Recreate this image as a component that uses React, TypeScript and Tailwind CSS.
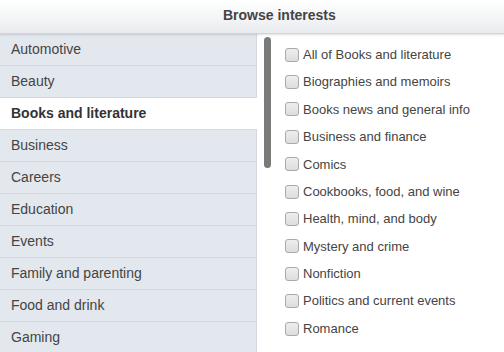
import React from "react";

const cats = [
  "Automotive",
  "Beauty",
  "Books and literature",
  "Business",
  "Careers",
  "Education",
  "Events",
  "Family and parenting",
  "Food and drink",
  "Gaming",
];

const subs = [
  "All of Books and literature",
  "Biographies and memoirs",
  "Books news and general info",
  "Business and finance",
  "Comics",
  "Cookbooks, food, and wine",
  "Health, mind, and body",
  "Mystery and crime",
  "Nonfiction",
  "Politics and current events",
  "Romance",
];

export default function App() {
  return (
    <div
      className="w-[504px] h-[352px] overflow-hidden bg-white flex flex-col"
      style={{ fontFamily: '"Liberation Sans", Arial, sans-serif' }}
    >
      <div className="relative z-10 h-[34px] shrink-0 flex items-center pl-[223px] pb-[2px] bg-gradient-to-b from-[#ffffff] to-[#e9ecef] border-b border-[#cfd5db] shadow-[0_1px_2px_rgba(0,0,0,0.12)]">
        <span className="text-[14px] font-bold text-[#444]">Browse interests</span>
      </div>
      <div className="flex flex-1 min-h-0">
        <div className="w-[257px] shrink-0 bg-[#e3e8ee] border-r border-[#d3d9df]">
          {cats.map((c) => {
            const sel = c === "Books and literature";
            return (
              <div
                key={c}
                className={
                  sel
                    ? "h-8 flex items-center pl-[11px] border-b border-[#d3d9df] bg-white text-[14px] font-bold text-[#333] -mr-px"
                    : "h-8 flex items-center pl-[11px] border-b border-[#d3d9df] text-[14px] text-[#444]"
                }
              >
                {c}
              </div>
            );
          })}
        </div>
        <div className="flex-1 flex pl-[7px]">
          <div className="w-[7px] h-[131px] mt-[3px] rounded-full bg-[#7a7a7a] shrink-0" />
          <div className="pl-[14px] pt-[7px]">
            {subs.map((s) => (
              <div key={s} className="h-[27.4px] flex items-center">
                <span className="w-[14px] h-[14px] rounded-[3px] border border-[#aaaaaa] bg-gradient-to-b from-[#eeeeee] to-[#dddddd] shrink-0" />
                <span className="ml-[4px] text-[13px] text-[#444]">{s}</span>
              </div>
            ))}
          </div>
        </div>
      </div>
    </div>
  );
}
